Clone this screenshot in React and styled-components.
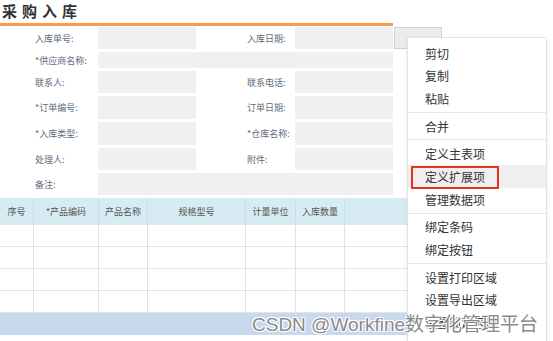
import React from 'react';
import styled, { createGlobalStyle } from 'styled-components';

const GlobalStyle = createGlobalStyle`
  html, body {
    margin: 0;
    padding: 0;
    background: #fff;
    width: 553px;
    height: 341px;
    overflow: hidden;
  }
  body {
    font-family: "Noto Sans CJK SC", "Noto Sans", sans-serif;
  }
`;

const Page = styled.div`
  position: relative;
  width: 553px;
  height: 341px;
  overflow: hidden;
`;

const Title = styled.h1`
  margin: 0;
  height: 23px;
  padding-left: 2px;
  font-size: 15px;
  line-height: 22px;
  font-weight: 700;
  letter-spacing: 5px;
  color: #333;
`;

const Rule = styled.div`
  width: 393px;
  height: 3px;
  background: #f89d4f;
`;

const Form = styled.div`
  display: grid;
  grid-template-columns: 35px 63px 98px 51px 48px 98px 49px;
  grid-template-rows: 22px 16px 22px 23px 23px 22px 22px;
  row-gap: 3px;
  padding-top: 1px;
`;

const Label = styled.div`
  grid-column: ${(p) => (p.$second ? 5 : 2)};
  display: flex;
  align-items: center;
  font-size: 9px;
  color: #5d6d7e;
  white-space: nowrap;
`;

const Input = styled.div`
  grid-column: ${(p) => (p.$wide ? '3 / 7' : p.$second ? 6 : 3)};
  background: #f0f0f0;
`;

const Selected = styled.div`
  grid-column: 7;
  margin-left: 1px;
  background: #ececec;
  border: 1px solid #c6d5e4;
`;

const Table = styled.div`
  margin-top: 3px;
  width: 440px;
`;

const Row = styled.div`
  display: grid;
  grid-template-columns: 33px 65px 49px 98px 50px 49px 1fr;
  height: ${(p) => (p.$head ? 27 : 22)}px;
  background: ${(p) => (p.$head ? '#d7ecf2' : '#fff')};
  border-bottom: 1px solid ${(p) => (p.$head ? '#d7ecf2' : '#e4e4e4')};
  box-sizing: border-box;
`;

const Cell = styled.div`
  display: flex;
  align-items: center;
  justify-content: center;
  font-size: 9px;
  color: #555;
  border-left: ${(p) => (p.$first ? 'none' : '1px solid #e2e2e2')};
  border-color: ${(p) => (p.$head ? '#c9dfe6' : '#e2e2e2')};
  white-space: nowrap;
`;

const Footer = styled.div`
  height: 22px;
  background: #c8d9ef;
`;

const Menu = styled.ul`
  position: absolute;
  left: 407px;
  top: 37px;
  width: 140px;
  margin: 0;
  padding: 4px 0 0;
  list-style: none;
  background: #fff;
  border: 1px solid #e3e3e3;
  border-radius: 2px;
  box-shadow: 0 1px 4px rgba(0, 0, 0, 0.08);
  height: 320px;
  box-sizing: border-box;
`;

const Item = styled.li`
  position: relative;
  height: ${(p) => (p.$active ? 23 : 22.6)}px;
  padding-left: 17px;
  display: flex;
  align-items: center;
  font-size: 12px;
  color: #333;
  background: ${(p) => (p.$active ? '#efefef' : 'transparent')};
`;

const Mark = styled.span`
  position: absolute;
  left: 3px;
  top: 1px;
  width: 88px;
  height: 23px;
  border: 2px solid #e8341f;
  box-sizing: border-box;
`;

const Sep = styled.li`
  height: 1px;
  margin: 2px 0;
  background: #e6e6e6;
`;

const Watermark = styled.div`
  position: absolute;
  left: 252px;
  top: 309px;
  font-family: "Liberation Sans", "Noto Sans CJK SC", sans-serif;
  font-size: 19px;
  color: #8a8a8a;
  white-space: nowrap;
  text-shadow: 1px 1px 0 #fff, -1px -1px 0 #fff, 1px -1px 0 #fff, -1px 1px 0 #fff;
`;

const rows = [
  ['入库单号:', '入库日期:'],
  ['*供应商名称:'],
  ['联系人:', '联系电话:'],
  ['*订单编号:', '订单日期:'],
  ['*入库类型:', '*仓库名称:'],
  ['处理人:', '附件:'],
  ['备注:'],
];

const columns = ['序号', '*产品编码', '产品名称', '规格型号', '计量单位', '入库数量', ''];

const menu = [
  ['剪切', '复制', '粘贴'],
  ['合并'],
  ['定义主表项', '定义扩展项', '管理数据项'],
  ['绑定条码', '绑定按钮'],
  ['设置打印区域', '设置导出区域', '设置锁定区域'],
];

export default function App() {
  return (
    <Page>
      <GlobalStyle />
      <Title>采购入库</Title>
      <Rule />
      <Form>
        {rows.map((r, i) => (
          <React.Fragment key={i}>
            <Label style={{ gridRow: i + 1 }}>{r[0]}</Label>
            {r.length === 1 ? (
              <Input $wide style={{ gridRow: i + 1 }} />
            ) : (
              <>
                <Input style={{ gridRow: i + 1 }} />
                <Label $second style={{ gridRow: i + 1 }}>{r[1]}</Label>
                <Input $second style={{ gridRow: i + 1 }} />
              </>
            )}
            {i === 0 && <Selected style={{ gridRow: 1 }} />}
          </React.Fragment>
        ))}
      </Form>
      <Table>
        <Row $head>
          {columns.map((c, i) => (
            <Cell key={i} $head $first={i === 0}>{c}</Cell>
          ))}
        </Row>
        {[0, 1, 2, 3].map((r) => (
          <Row key={r}>
            {columns.map((c, i) => (
              <Cell key={i} $first={i === 0} />
            ))}
          </Row>
        ))}
        <Footer />
      </Table>
      <Menu>
        {menu.map((group, g) => (
          <React.Fragment key={g}>
            {g > 0 && <Sep />}
            {group.map((t) => (
              <Item key={t} $active={t === '定义扩展项'}>
                {t === '定义扩展项' && <Mark />}
                {t}
              </Item>
            ))}
          </React.Fragment>
        ))}
      </Menu>
      <Watermark>CSDN @Workfine数字化管理平台</Watermark>
    </Page>
  );
}
